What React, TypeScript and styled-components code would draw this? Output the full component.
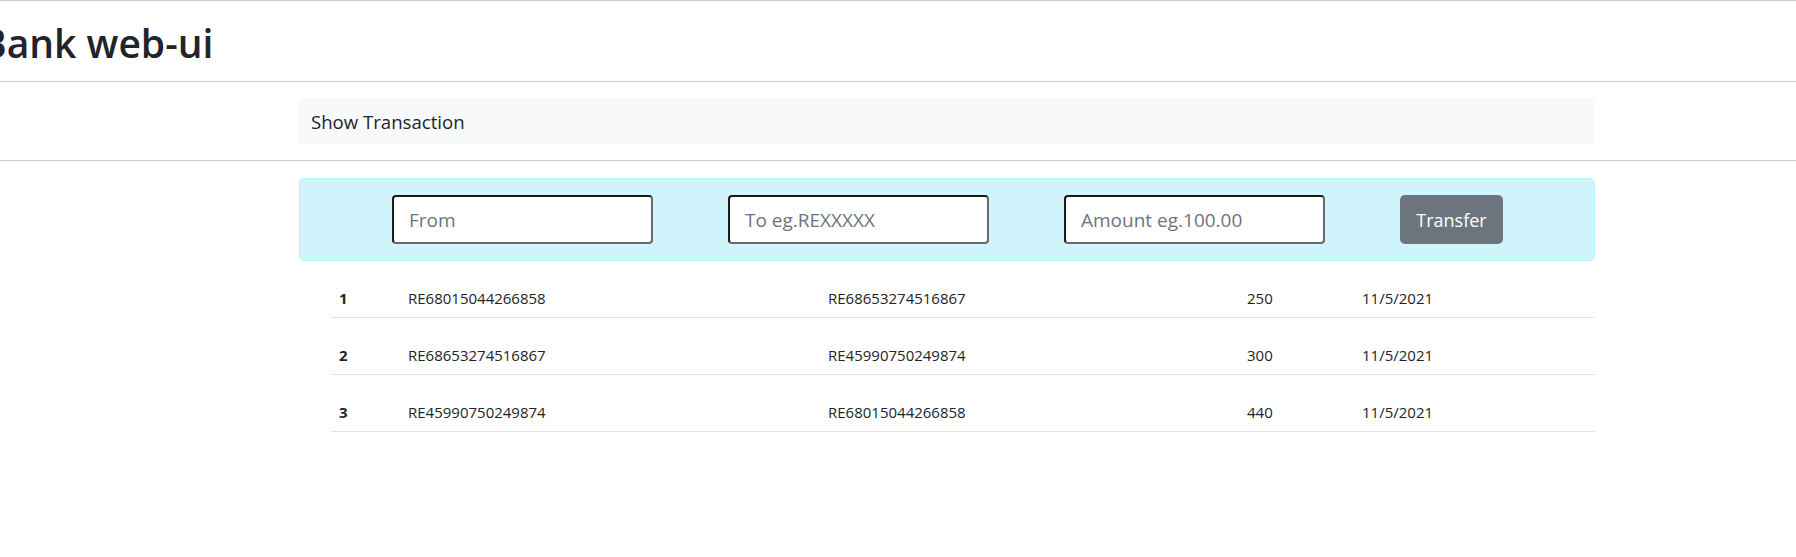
import React from "react";
import styled, { createGlobalStyle } from "styled-components";

const GlobalStyle = createGlobalStyle`
  html, body {
    margin: 0;
    padding: 0;
    background: #ffffff;
    color: #212529;
    font-family: "Open Sans", "Noto Sans", sans-serif;
  }
  * { box-sizing: border-box; }
`;

const Page = styled.div`
  width: 100%;
  min-height: 557px;
  overflow: hidden;
`;

const Rule = styled.hr`
  margin: 0;
  border: 0;
  border-top: 1px solid #c8c9ca;
  height: 0;
`;

const Title = styled.h1`
  margin: 0 0 0 -19px;
  padding: 18px 0 14px;
  font-size: 39px;
  line-height: 48px;
  font-weight: 600;
  color: #212529;
  white-space: nowrap;
`;

const Container = styled.div<{ $flushBottom?: boolean }>`
  margin-left: 299px;
  width: 1296px;
  padding: ${(p) => (p.$flushBottom ? 17 : 16)}px 0 ${(p) => (p.$flushBottom ? 0 : 16)}px;
`;

const NavBar = styled.nav`
  height: 46px;
  display: flex;
  align-items: center;
  padding-left: 12px;
  background: #f8f9fa;
`;

const Brand = styled.span`
  font-size: 18.6px;
  color: #212529;
`;

const TransferForm = styled.form`
  display: flex;
  align-items: center;
  gap: 75px;
  padding: 16px 0 16px 92px;
  background: #cff4fc;
  border: 1px solid #b6effb;
  border-radius: 5px;
`;

const Field = styled.input`
  width: 261px;
  height: 49px;
  padding: 0 15px;
  border: 2px solid;
  border-color: #1a1a1a #6a6a6a #6a6a6a #1a1a1a;
  border-radius: 4px;
  background: #ffffff;
  font-family: inherit;
  font-size: 19px;
  color: #212529;
  outline: none;
  &::placeholder {
    color: #6c757d;
  }
`;

const Button = styled.button`
  width: 103px;
  height: 49px;
  border: 0;
  border-radius: 5px;
  background: #6c757d;
  color: #ffffff;
  font-family: inherit;
  font-size: 18px;
  cursor: pointer;
`;

const Table = styled.div`
  margin-left: 32px;
  display: flex;
  flex-direction: column;
`;

const Row = styled.div`
  display: grid;
  grid-template-columns: 69px 420px 419px 115px 1fr;
  border-bottom: 1px solid #dee2e6;
`;

const Cell = styled.div<{ $bold?: boolean }>`
  padding: 27px 8px 8px;
  font-size: 15px;
  line-height: 21px;
  font-weight: ${(p) => (p.$bold ? 700 : 400)};
  color: #212529;
  white-space: nowrap;
`;

const rows = [
  { id: 1, from: "RE68015044266858", to: "RE68653274516867", amount: 250, date: "11/5/2021" },
  { id: 2, from: "RE68653274516867", to: "RE45990750249874", amount: 300, date: "11/5/2021" },
  { id: 3, from: "RE45990750249874", to: "RE68015044266858", amount: 440, date: "11/5/2021" },
];

export default function App() {
  return (
    <Page>
      <GlobalStyle />
      <Rule />
      <Title>Bank web-ui</Title>
      <Rule />
      <Container>
        <NavBar>
          <Brand>Show Transaction</Brand>
        </NavBar>
      </Container>
      <Rule />
      <Container $flushBottom>
        <TransferForm onSubmit={(e) => e.preventDefault()}>
          <Field placeholder="From" />
          <Field placeholder="To eg.REXXXXX" />
          <Field placeholder="Amount eg.100.00" />
          <Button type="submit">Transfer</Button>
        </TransferForm>
        <Table>
          {rows.map((r) => (
            <Row key={r.id}>
              <Cell $bold>{r.id}</Cell>
              <Cell>{r.from}</Cell>
              <Cell>{r.to}</Cell>
              <Cell>{r.amount}</Cell>
              <Cell>{r.date}</Cell>
            </Row>
          ))}
        </Table>
      </Container>
    </Page>
  );
}
